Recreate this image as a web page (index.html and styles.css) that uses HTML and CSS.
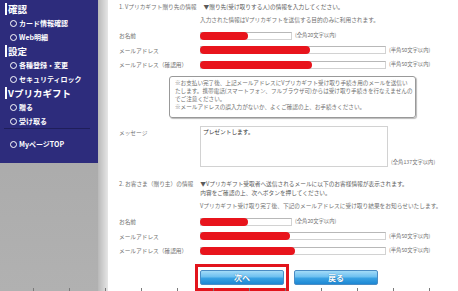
FILE: index.html
```html
<!DOCTYPE html>
<html lang="ja">
<head>
    <meta charset="UTF-8">
    <meta name="viewport" content="width=device-width, initial-scale=1.0">
    <title>Vプリカギフト 贈る</title>
    <link rel="stylesheet" href="styles.css">
</head>
<body>
<div class="page">
    <div class="side">
        <nav class="menu">
            <div class="menu-head">確認</div>
            <a class="menu-item" href="#">カード情報確認</a>
            <a class="menu-item" href="#">Web明細</a>
            <div class="menu-head">設定</div>
            <a class="menu-item" href="#">各種登録・変更</a>
            <a class="menu-item" href="#">セキュリティロック</a>
            <div class="menu-head">Vプリカギフト</div>
            <a class="menu-item" href="#">贈る</a>
            <a class="menu-item" href="#">受け取る</a>
            <div class="menu-sep"></div>
            <a class="menu-item" href="#">MyページTOP</a>
        </nav>
    </div>
    <div class="gutter"></div>

    <div class="main">
        <!-- 贈り先 -->
        <div class="sec-head">
            <div class="sec-title">1. Vプリカギフト贈り先の情報</div>
            <div class="sec-text">▼贈り先(受け取りする人)の情報を入力してください。</div>
        </div>
        <p class="lead">入力された情報はVプリカギフトを送信する目的のみに利用されます。</p>

        <div class="form-row">
            <label>お名前</label>
            <span class="input input-s"><span class="mask mask-s"></span></span>
            <span class="note">(全角20文字以内)</span>
        </div>
        <div class="form-row">
            <label>メールアドレス</label>
            <span class="input input-l"><span class="mask mask-l"></span></span>
            <span class="note">(半角50文字以内)</span>
        </div>
        <div class="form-row">
            <label>メールアドレス（確認用）</label>
            <span class="input input-l"><span class="mask mask-xl"></span></span>
            <span class="note">(半角50文字以内)</span>
        </div>

        <div class="notice">
            ※お支払い完了後、上記メールアドレスにVプリカギフト受け取り手続き用のメールを送信い<br>
            たします。携帯電話(スマートフォン、フルブラウザ可)からは受け取り手続きを行なえませんの<br>
            でご注意ください。<br>
            ※メールアドレスの誤入力がないか、よくご確認の上、お手続きください。
        </div>

        <div class="form-row msg-row">
            <label>メッセージ</label>
            <textarea class="message" readonly>プレゼントします。</textarea>
            <span class="note">(全角137文字以内)</span>
        </div>

        <!-- 贈り主 -->
        <div class="sec-head sec-two">
            <div class="sec-title">2. お客さま（贈り主）の情報</div>
            <div class="sec-text">▼Vプリカギフト受取者へ送信されるメールに以下のお客様情報が表示されます。<br>内容をご確認の上、次へボタンを押してください。</div>
        </div>
        <p class="lead">Vプリカギフト受け取り完了後、下記のメールアドレスに受け取り結果をお知らせいたします。</p>

        <div class="form-row">
            <label>お名前</label>
            <span class="input input-s"><span class="mask mask-s"></span></span>
            <span class="note">(全角20文字以内)</span>
        </div>
        <div class="form-row">
            <label>メールアドレス</label>
            <span class="input input-l"><span class="mask mask-m"></span></span>
            <span class="note">(半角50文字以内)</span>
        </div>
        <div class="form-row">
            <label>メールアドレス（確認用）</label>
            <span class="input input-l"><span class="mask mask-m2"></span></span>
            <span class="note">(半角50文字以内)</span>
        </div>

        <div class="buttons">
            <span class="frame"><button type="button" class="btn">次へ</button></span>
            <button type="button" class="btn">戻る</button>
        </div>
    </div>
    <div class="ticks"></div>
</div>
</body>
</html>
```

FILE: styles.css
```css
* {
    box-sizing: border-box;
}
body {
    margin: 0;
    font-family: "Noto Sans CJK JP", "Noto Sans", sans-serif;
    overflow: hidden;
}
.page {
    position: relative;
    display: flex;
    height: 291px;
}

/* サイドメニュー */
.side {
    width: 98px;
    flex-shrink: 0;
    background: linear-gradient(#a5a5a5, #b1b1b1);
}
.menu {
    background-color: #2d2c7c;
    padding: 2px 0 12px;
}
.menu-head {
    margin: 1px 0 1px 5px;
    padding-left: 1px;
    border-left: 2px solid #fff;
    line-height: 12px;
    color: #fff;
    font-size: 9.5px;
    font-weight: bold;
}
.menu-item {
    display: flex;
    align-items: center;
    gap: 2px;
    height: 14px;
    padding-left: 10px;
    color: #fff;
    font-size: 7px;
    font-weight: bold;
    text-decoration: none;
}
.menu-item::before {
    content: "";
    width: 5px;
    height: 5px;
    border-radius: 50%;
    border: 1.5px solid #fff;
    background-color: #2d2c7c;
}
.menu-sep {
    height: 1px;
    margin: 0 8px 8px 4px;
    background-color: #1f1e5a;
}
.gutter {
    width: 10px;
    flex-shrink: 0;
    background: linear-gradient(to right, #b9b9b9, #e6e6e6);
}

/* フォーム */
.main {
    flex: 1;
    background-color: #fff;
    padding: 1.5px 0 0 11px;
    font-size: 5.7px;
    line-height: 9px;
    color: #707070;
}
.sec-head {
    display: flex;
    gap: 7px;
}
.sec-title {
    min-width: 74px;
    white-space: nowrap;
}
.sec-text {
    color: #5a5a5a;
}
.sec-two {
    margin-top: 11.5px;
}
.lead {
    margin: 4.5px 0 0 81px;
}
.form-row {
    display: flex;
    align-items: center;
    height: 14.5px;
}
.lead + .form-row {
    margin-top: 4.25px;
}
.form-row label {
    width: 81px;
    flex-shrink: 0;
    white-space: nowrap;
}
.input {
    display: flex;
    height: 8px;
    border: 1px solid #d2d2d2;
    border-top-color: #b8b8b8;
    background-color: #fff;
}
.input-s {
    width: 92px;
}
.input-l {
    width: 186px;
}
.mask {
    height: 8px;
    margin: -1px;
    border-radius: 4px;
    background-color: #e8141c;
}
.mask-s { width: 48px; }
.mask-l { width: 110px; }
.mask-xl { width: 112px; }
.mask-m { width: 90px; }
.mask-m2 { width: 95px; }
.note {
    margin-left: 3px;
    font-size: 5.3px;
    white-space: nowrap;
}
.notice {
    width: 247px;
    height: 42px;
    margin: 4.25px 0 0 50px;
    padding: 2px 5px;
    border: 1px solid #999;
    border-radius: 3px;
    box-shadow: 1px 1px 1px #bbb;
    font-size: 5.6px;
    line-height: 8px;
    white-space: nowrap;
}
.msg-row {
    height: auto;
    align-items: flex-start;
    margin-top: 8px;
}
.msg-row label {
    padding-top: 1.5px;
}
.message {
    width: 188px;
    height: 41px;
    margin: 0;
    padding: 0 2px;
    border: 1px solid #d2d2d2;
    resize: none;
    font-family: inherit;
    font-size: 5.7px;
    line-height: 9px;
    color: #333;
}
.msg-row .note {
    align-self: flex-end;
}
.buttons {
    display: flex;
    align-items: center;
    gap: 5px;
    margin: 5.75px 0 0 76px;
}
.frame {
    display: flex;
    padding: 3px 2px;
    border: 3px solid #e2141c;
}
.btn {
    width: 84px;
    height: 15px;
    padding: 0;
    border: 1px solid #4a8cc4;
    border-radius: 2px;
    background: linear-gradient(#a3dbf8, #6cc0f0 45%, #3aa2e3 55%, #1d88d4);
    color: #fff;
    font-family: inherit;
    font-size: 8px;
    font-weight: bold;
    text-shadow: 0 0 1px #1a5f96;
}
.ticks {
    position: absolute;
    left: 0;
    right: 0;
    bottom: 0;
    height: 3px;
    background: repeating-linear-gradient(to right, transparent 0 33px, #7a7a7a 33px 34px, transparent 34px 36px);
}
```
